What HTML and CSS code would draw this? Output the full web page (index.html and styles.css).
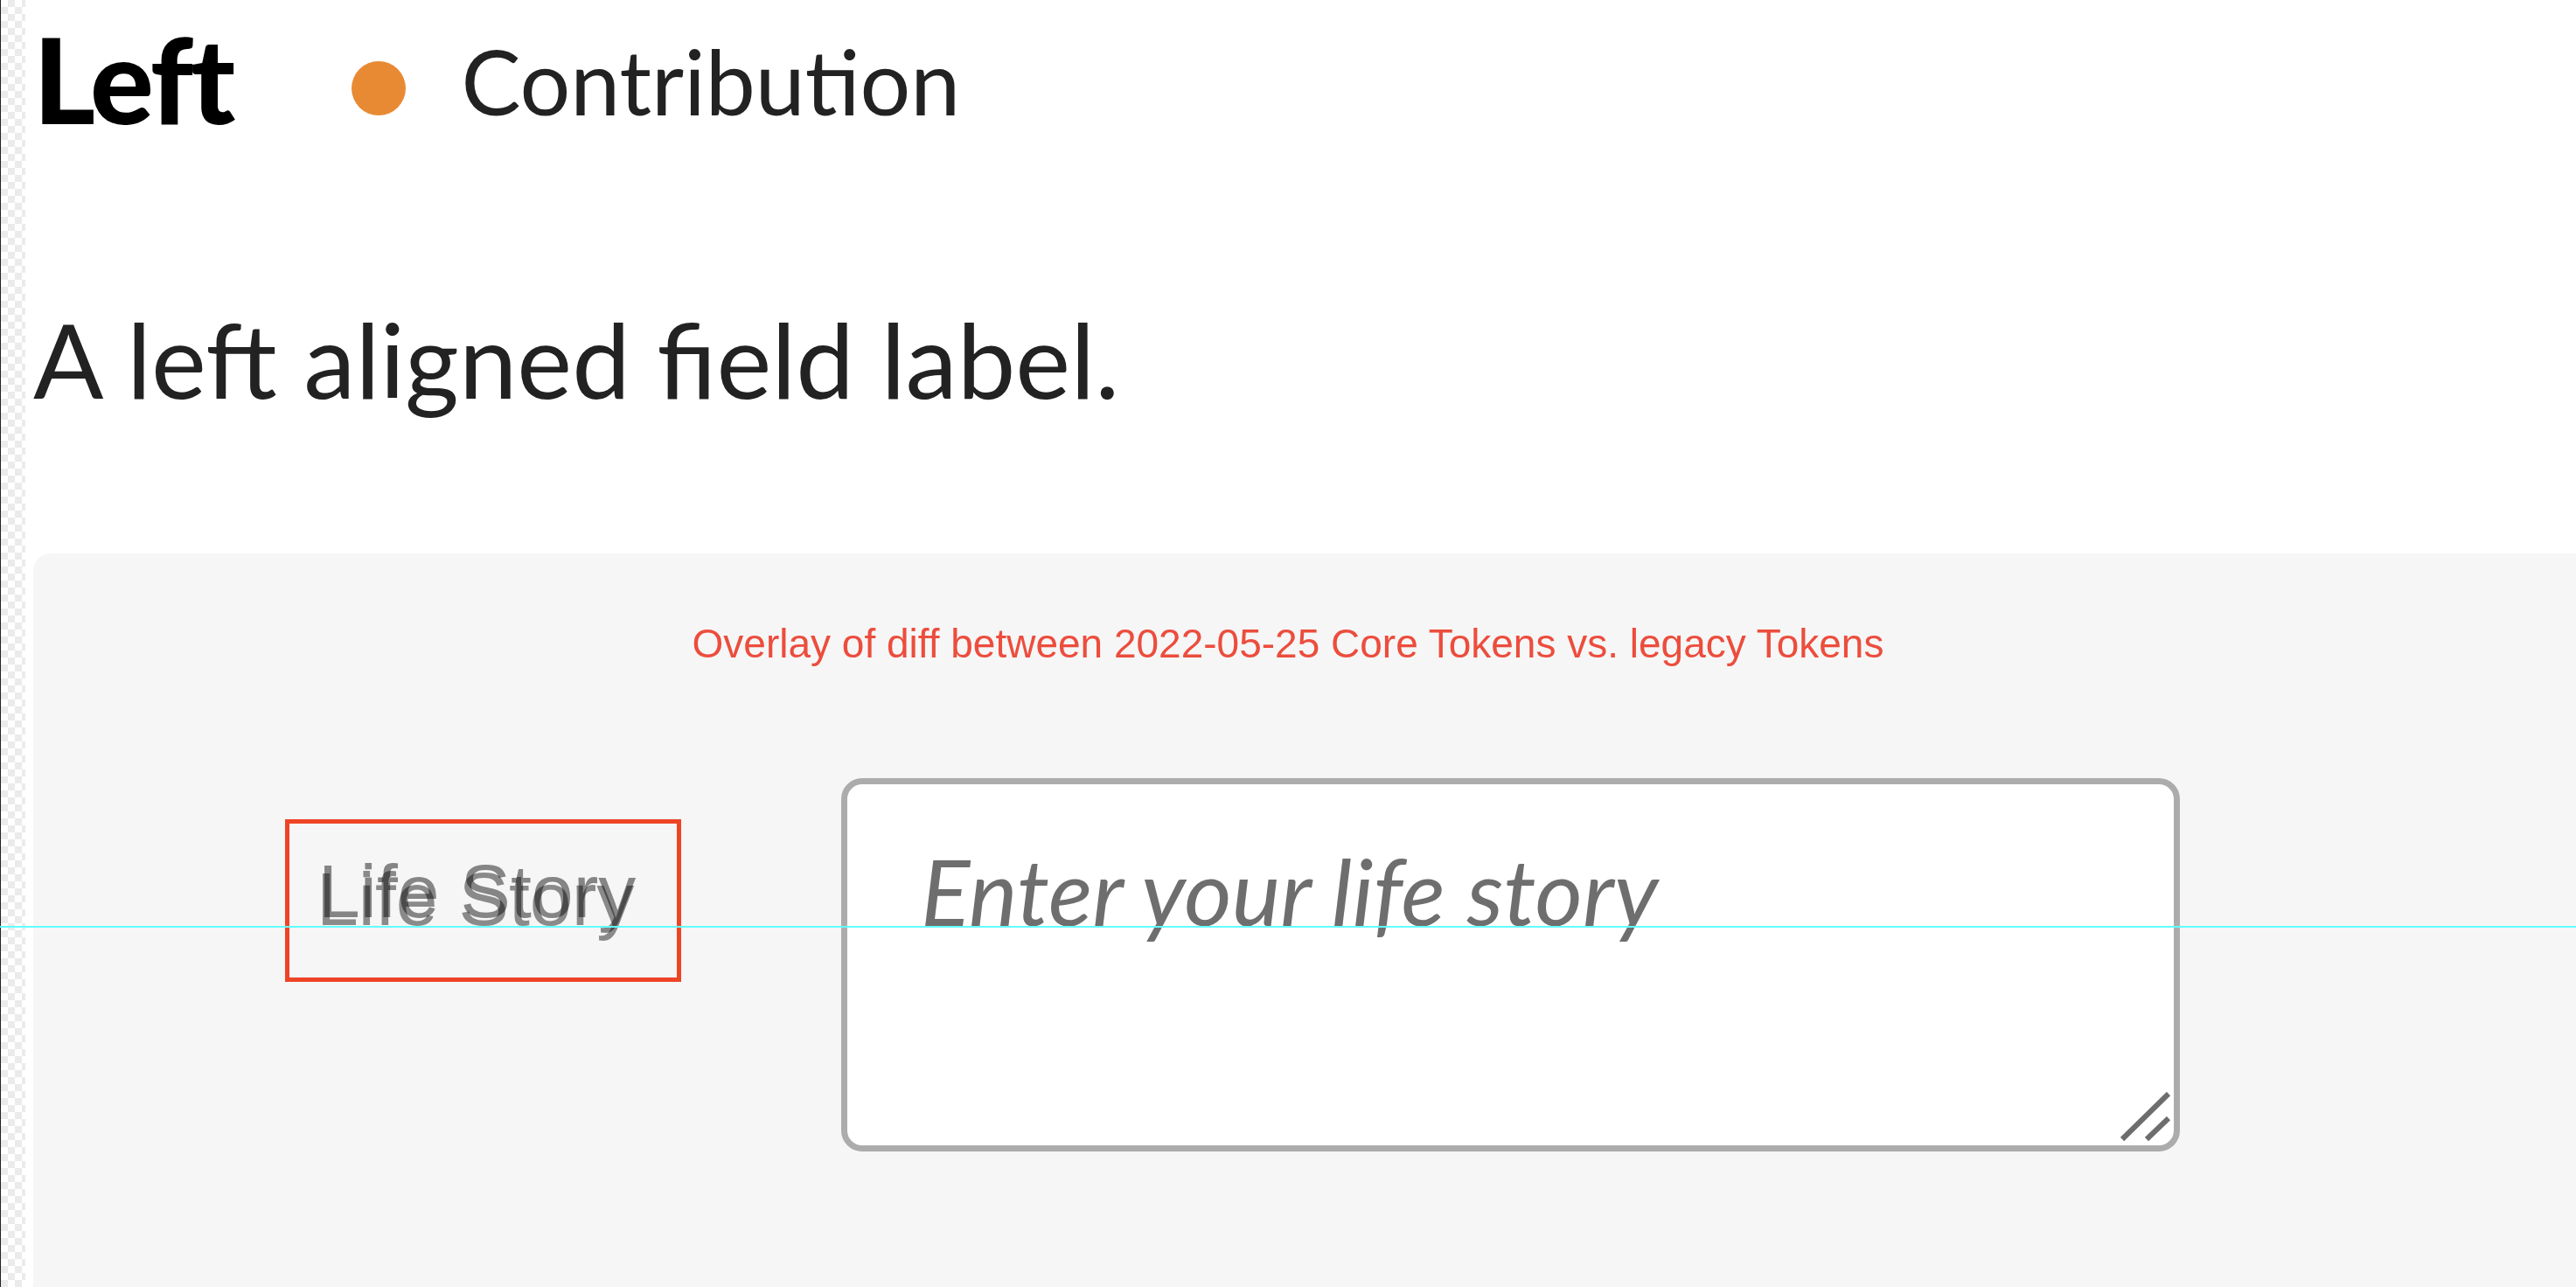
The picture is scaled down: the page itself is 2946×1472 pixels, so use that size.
FILE: index.html
```html
<!DOCTYPE html>
<html lang="en">
<head>
<meta charset="utf-8">
<title>Left - Contribution</title>
<link rel="stylesheet" href="styles.css">
</head>
<body>
<div class="page">
  <div class="strip"></div>
  <main class="main">
    <header class="header">
      <h1 class="title">Left</h1>
      <div class="status">
        <span class="dot"></span>
        <span class="status-text">Contribution</span>
      </div>
    </header>
    <p class="desc">A left aligned field label.</p>
    <section class="panel">
      <p class="overlay-note">Overlay of diff between 2022-05-25 Core Tokens vs. legacy Tokens</p>
      <div class="field-row">
        <div class="label-box">
          <span class="label-stack">
            <span class="label-text">Life Story</span>
            <span class="label-text label-ghost" aria-hidden="true">Life Story</span>
          </span>
        </div>
        <div class="textarea">
          <span class="placeholder">Enter your life story</span>
          <svg class="resize-handle" width="64" height="64" viewBox="0 0 64 64" aria-hidden="true">
            <line x1="5" y1="57" x2="58" y2="5" stroke="#6d6d6d" stroke-width="6"/>
            <line x1="33" y1="57" x2="58" y2="33" stroke="#6d6d6d" stroke-width="6"/>
          </svg>
        </div>
      </div>
    </section>
  </main>
</div>
<div class="baseline-guide"></div>
</body>
</html>
```
FILE: styles.css
```css
html, body {
  margin: 0;
  padding: 0;
  height: 100%;
  overflow: hidden;
  background: #ffffff;
}

.page {
  display: flex;
  height: 100vh;
}

.strip {
  width: 28px;
  flex: 0 0 28px;
  border-left: 1px solid #222222;
  background-color: #ffffff;
  background-image: repeating-conic-gradient(#ebebeb 0 25%, #ffffff 0 50%);
  background-size: 16px 16px;
}

.main {
  flex: 1;
  min-width: 0;
  padding-left: 9px;
  display: flex;
  flex-direction: column;
}

.header {
  display: flex;
  align-items: flex-start;
  padding-top: 23px;
}

.title {
  margin: 0;
  font-family: Lato, "Open Sans", sans-serif;
  font-weight: 900;
  font-size: 136px;
  line-height: 134px;
  letter-spacing: -3px;
  color: #000000;
}

.status {
  display: flex;
  align-items: flex-start;
  margin-left: 136px;
  margin-top: 19px;
}

.dot {
  width: 62px;
  height: 62px;
  border-radius: 50%;
  background: #e88a34;
  margin-top: 28px;
}

.status-text {
  margin-left: 63px;
  font-family: Lato, "Open Sans", sans-serif;
  font-size: 102px;
  line-height: 102px;
  color: #222222;
}

.desc {
  margin: 194px 0 0 0;
  font-family: Lato, "Open Sans", sans-serif;
  font-size: 119px;
  line-height: 119px;
  color: #222222;
}

.panel {
  margin-top: 163px;
  flex: 1;
  background: #f6f6f6;
  border-top-left-radius: 20px;
  padding: 80px 38px 0 0;
}

.overlay-note {
  margin: 0;
  text-align: center;
  font-family: "Liberation Sans", Arial, sans-serif;
  font-size: 46px;
  line-height: 46px;
  color: #ec4d3d;
}

.field-row {
  display: flex;
  align-items: flex-start;
  margin-top: 131px;
  padding-left: 288px;
}

.label-box {
  box-sizing: border-box;
  width: 453px;
  height: 186px;
  margin-top: 47px;
  border: 5px solid #ee4426;
  padding-top: 43px;
  padding-left: 31px;
  flex: 0 0 auto;
}

.label-stack {
  position: relative;
  display: inline-block;
}

.label-text {
  display: block;
  font-family: "Liberation Sans", Arial, sans-serif;
  font-size: 86px;
  line-height: 86px;
  color: #8a8a8a;
  white-space: nowrap;
}

.label-ghost {
  position: absolute;
  left: 2px;
  top: -9px;
  mix-blend-mode: multiply;
}

.textarea {
  position: relative;
  margin-left: 183px;
  width: 1531px;
  height: 427px;
  box-sizing: border-box;
  border: 7px solid #acacac;
  border-radius: 24px;
  background: #ffffff;
  padding: 69px 0 0 84px;
  flex: 0 0 auto;
}

.placeholder {
  display: block;
  font-family: Lato, "Open Sans", sans-serif;
  font-style: italic;
  font-size: 105px;
  line-height: 104px;
  color: #6e6e6e;
  white-space: nowrap;
}

.resize-handle {
  position: absolute;
  right: 0;
  bottom: 0;
}

.baseline-guide {
  position: absolute;
  left: 0;
  right: 0;
  top: 1059px;
  height: 2px;
  background: #62ffff;
}
```
